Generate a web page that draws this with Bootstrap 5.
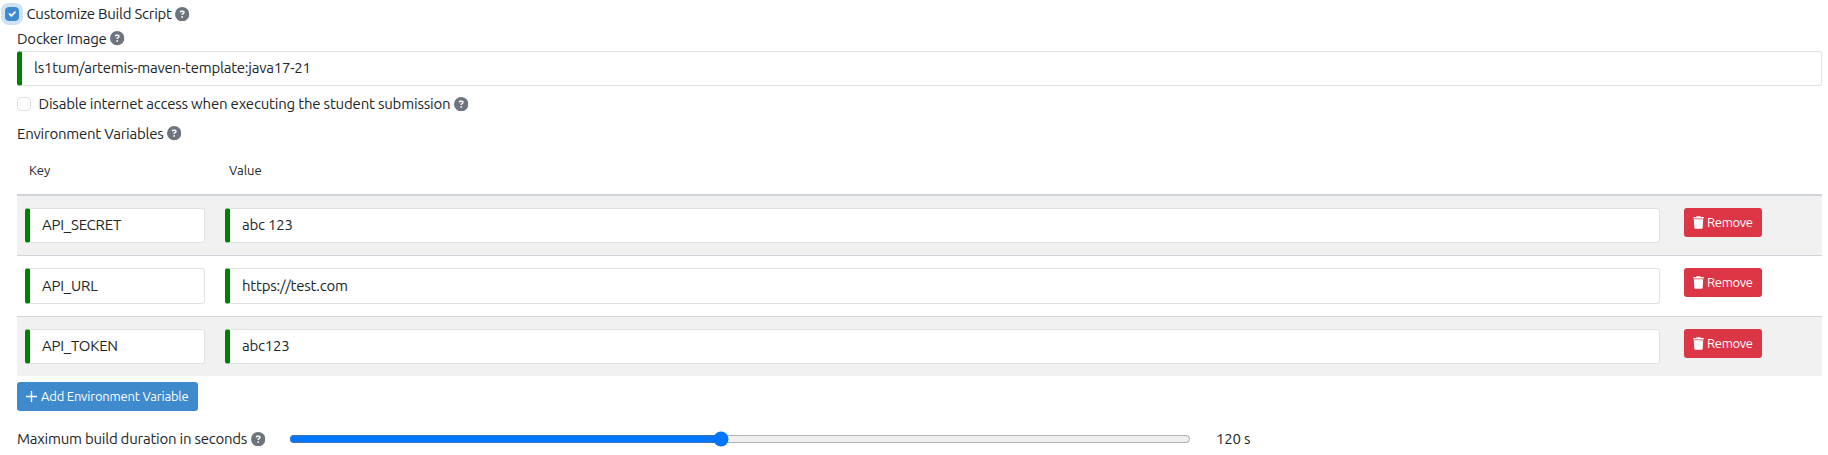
<!DOCTYPE html>
<html lang="en">
<head>
<meta charset="utf-8">
<meta name="viewport" content="width=device-width, initial-scale=1">
<title>Build configuration</title>
<link href="https://cdn.jsdelivr.net/npm/bootstrap@5.3.0/dist/css/bootstrap.min.css" rel="stylesheet">
<style>
body{font-family:Ubuntu,"Noto Sans",sans-serif;font-size:15px;line-height:24px;letter-spacing:-.24px;color:#212529;background:#fff;overflow:hidden}
.page{padding:2px 6px 0 17px;height:455px}
.line{display:flex;align-items:center;white-space:nowrap}
.help{width:14.4px;height:14.4px;flex:none;margin-left:3.6px;fill:#6c757d}
.form-check-input{width:14px;height:14px;margin:0;flex:none;border-color:#dee2e6;border-radius:3.5px}
.form-check-input:checked{background-color:#3e8acc;border-color:#3e8acc}
.form-check-input.ring{box-shadow:0 0 0 4px #cfe2f2}
.form-control{height:35px;border:1px solid #dee2e6;border-left:5px solid green;border-radius:3px;padding:0 12px 2px;font-size:15px;line-height:31px;letter-spacing:-.23px;color:#212529;background:#fff}
.table{--bs-table-striped-bg:#f1f1f1;table-layout:fixed;border-collapse:separate;border-spacing:0;margin:0}
.table>thead>tr>th{height:52px;font-size:13px;font-weight:400;letter-spacing:0;padding:1px 12px 0;vertical-align:middle;border:0;border-bottom:2px solid #ced4da;line-height:20px}
.table>tbody>tr>td{height:60px;padding:12px 12px 11px 8px;vertical-align:top;border:0;border-bottom:1px solid #ced4da;line-height:0}
.table>tbody>tr:nth-child(2)>td{height:61px}
.table>tbody>tr:nth-child(2) .form-control{height:36px}
.table>tbody>tr:last-child>td{height:59px;border-bottom:0}
.table>tbody>tr>td:last-child{padding-left:12px}
.btn{font-size:13px;line-height:20px;border:0;border-radius:3px;padding:0 9px 1px;height:29px;display:inline-flex;align-items:center;white-space:nowrap;color:#fff;letter-spacing:-.2px}
.btn svg{fill:#fff;flex:none}
.btn-primary{background:#3e8acc}
.btn-danger{background:#dc3545;width:78px;letter-spacing:-.3px}
.btn-danger .ms-1{margin-left:3px!important}
.duration{width:902px;margin:0 0 0 24px;height:16px}
</style>
</head>
<body>
<svg class="d-none">
<symbol id="q" viewBox="0 0 512 512"><path d="M256 512A256 256 0 1 0 256 0a256 256 0 1 0 0 512zM169.800 165.300c7.900-22.300 29.100-37.300 52.800-37.300h58.300c34.900 0 63.100 28.300 63.100 63.100 0 22.600-12.100 43.500-31.700 54.800L280 264.400c-.2 13-10.900 23.600-24 23.600-13.300 0-24-10.700-24-24v-13.500c0-8.600 4.600-16.500 12.100-20.800l44.300-25.400c4.700-2.700 7.600-7.700 7.600-13.100 0-8.400-6.800-15.100-15.100-15.100h-58.300c-3.400 0-6.400 2.100-7.500 5.300l-.4 1.200c-4.400 12.500-18.200 19-30.600 14.600s-19-18.200-14.600-30.600zM224 352a32 32 0 1 1 64 0 32 32 0 1 1-64 0z"/></symbol>
<symbol id="bin" viewBox="0 0 448 512"><path d="M135.200 17.700 128 32H32C14.300 32 0 46.300 0 64s14.300 32 32 32h384c17.700 0 32-14.300 32-32s-14.300-32-32-32h-96l-7.200-14.300C307.400 6.800 296.300 0 284.200 0H163.800c-12.100 0-23.200 6.800-28.600 17.700zM416 128H32l21.200 339c1.600 25.300 22.600 45 47.900 45h245.800c25.300 0 46.300-19.700 47.900-45z"/></symbol>
</svg>
<main class="page d-flex flex-column">
  <div class="line" style="height:24px;margin-left:-12px"><input class="form-check-input ring" type="checkbox" checked aria-label="Customize Build Script"><span style="margin-left:7.500px">Customize Build Script</span><svg class="help"><use href="#q"/></svg></div>
  <div class="line" style="height:25px"><span>Docker Image</span><svg class="help"><use href="#q"/></svg></div>
  <input class="form-control" value="ls1tum/artemis-maven-template:java17-21" aria-label="Docker Image">
  <div class="line" style="height:36px;margin-bottom:1px"><input class="form-check-input" type="checkbox" aria-label="Disable internet access"><span style="margin-left:7.500px;letter-spacing:-.2px">Disable internet access when executing the student submission</span><svg class="help"><use href="#q"/></svg></div>
  <div class="line" style="height:21px"><span>Environment Variables</span><svg class="help"><use href="#q"/></svg></div>
  <table class="table table-striped">
    <colgroup><col style="width:200px"><col><col style="width:150px"></colgroup>
    <thead><tr><th>Key</th><th>Value</th><th></th></tr></thead>
    <tbody>
      <tr><td><input class="form-control" value="API_SECRET"></td><td><input class="form-control" value="abc 123"></td><td><button class="btn btn-danger"><svg width="11" height="13"><use href="#bin"/></svg><span class="ms-1">Remove</span></button></td></tr>
      <tr><td><input class="form-control" value="API_URL"></td><td><input class="form-control" value="https://test.com"></td><td><button class="btn btn-danger"><svg width="11" height="13"><use href="#bin"/></svg><span class="ms-1">Remove</span></button></td></tr>
      <tr><td><input class="form-control" value="API_TOKEN"></td><td><input class="form-control" value="abc123"></td><td><button class="btn btn-danger"><svg width="11" height="13"><use href="#bin"/></svg><span class="ms-1">Remove</span></button></td></tr>
    </tbody>
  </table>
  <div style="margin-top:6px;height:29px;display:flex"><button class="btn btn-primary"><svg width="11" height="11" viewBox="0 0 11 11"><path d="M4.800 0h1.400v4.800H11v1.400H6.200V11H4.800V6.200H0V4.800h4.800z"/></svg><span class="ms-1">Add Environment Variable</span></button></div>
  <div class="line" style="margin-top:16px;height:24px"><span>Maximum build duration in seconds</span><svg class="help"><use href="#q"/></svg><input class="duration" type="range" min="10" max="240" value="120" aria-label="Maximum build duration"><span style="margin-left:25px">120 s</span></div>
</main>
<script src="https://cdn.jsdelivr.net/npm/bootstrap@5.3.0/dist/js/bootstrap.bundle.min.js"></script>
</body>
</html>
